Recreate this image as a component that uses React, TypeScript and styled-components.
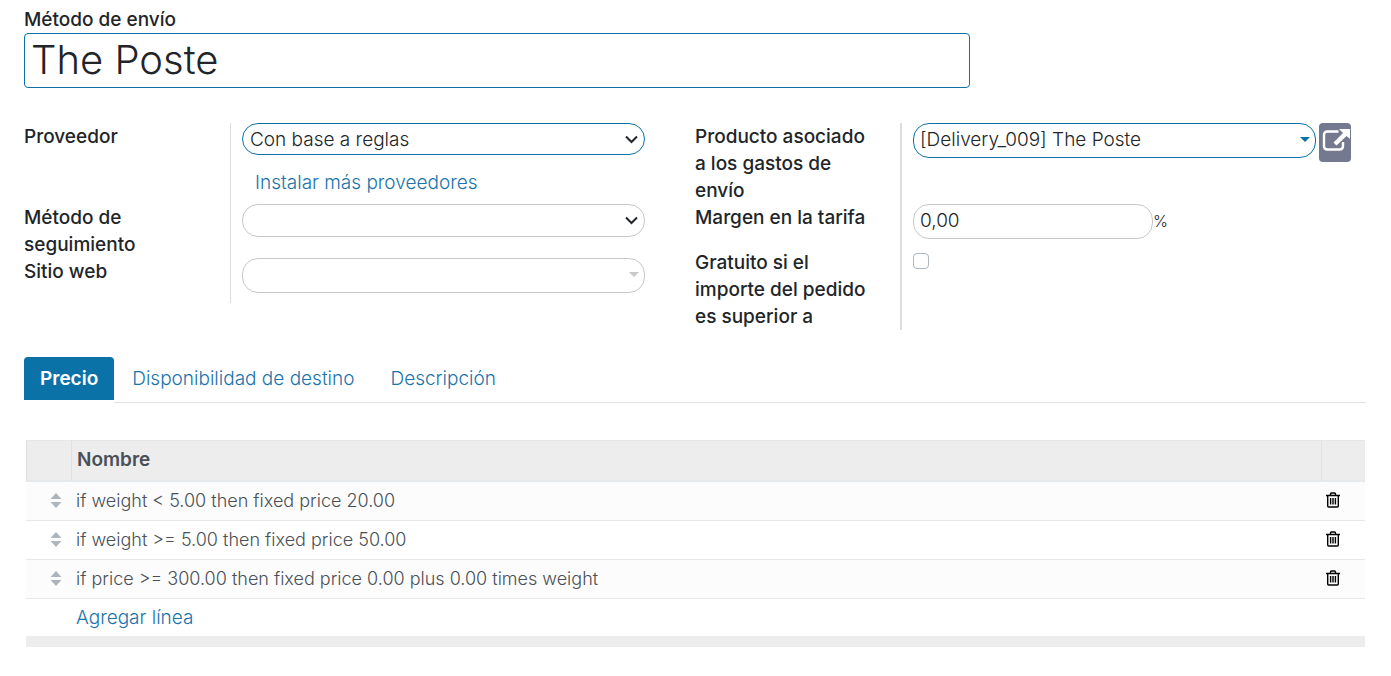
import React from 'react';
import styled, { createGlobalStyle, css } from 'styled-components';

const accent = '#0b72a8';
const line = '#c8c8c8';

const GlobalStyle = createGlobalStyle`
  * { box-sizing: border-box; }
  body {
    margin: 0;
    background: #fff;
    color: #212529;
    font-family: Inter, "Liberation Sans", sans-serif;
    font-size: 19px;
    font-weight: 300;
    line-height: 27px;
  }
  input, select, button { font: inherit; color: inherit; }
`;

const Sheet = styled.main`
  padding: 6px 25px 29px 24px;
`;

const TitleBlock = styled.div`
  width: 70.5%;
`;

const Label = styled.label`
  display: block;
  font-weight: 500;
`;

const TitleInput = styled.input`
  display: block;
  width: 100%;
  height: 55px;
  padding: 0 6px 2px;
  border: 1px solid ${accent};
  border-radius: 4px;
  background: #fff;
  font-size: 40px;
  outline: none;
`;

const Columns = styled.div`
  display: grid;
  grid-template-columns: 1fr 1fr;
  align-items: start;
  margin-top: 35px;
`;

const Group = styled.div<{ $end: number }>`
  padding-right: ${(p) => p.$end}px;
`;

const Row = styled.div<{ $rule: number; $min: number }>`
  display: grid;
  grid-template-columns: ${(p) => 207 - p.$rule}px 1fr;
  min-height: ${(p) => p.$min}px;

  > :first-child { padding-right: 25px; }
  > :last-child {
    border-left: ${(p) => p.$rule}px solid #dcdcde;
    padding-left: 11px;
  }
`;

const Field = styled.div``;

const Control = styled.div`
  position: relative;
  flex: 1;
`;

const box = css<{ $active?: boolean }>`
  display: block;
  width: 100%;
  border: 1px solid ${(p) => (p.$active ? accent : line)};
  border-radius: 16px;
  background: #fff;
  outline: none;
`;

const Select = styled.select<{ $active?: boolean }>`
  ${box}
  height: ${(p) => (p.$active ? 32 : 33)}px;
  padding: 0 7px;
  appearance: none;
`;

const TextInput = styled.input<{ $active?: boolean }>`
  ${box}
  height: 35px;
  padding: 0 6px 2px;
`;

const Chevron = styled.svg`
  position: absolute;
  right: 7px;
  top: 12px;
  pointer-events: none;
`;

const Caret = styled.span<{ $active?: boolean }>`
  position: absolute;
  right: 6px;
  top: 14px;
  border: 5px solid transparent;
  border-top-color: ${(p) => (p.$active ? accent : line)};
  border-bottom: 0;
  pointer-events: none;
`;

const Link = styled.a`
  color: #1a73aa;
  text-decoration: none;
`;

const InstallLink = styled(Link)`
  display: inline-block;
  margin: 14px 0 0 13px;
`;

const Inline = styled.div`
  display: flex;
  align-items: flex-start;
  gap: 3px;
`;

const OpenButton = styled.button`
  display: flex;
  justify-content: center;
  width: 32px;
  height: 39px;
  padding: 5px 0 0 2px;
  border: 0;
  border-radius: 4px;
  background: #75798f;
`;

const Percent = styled.div`
  display: flex;
  align-items: center;

  input { width: 240px; }
  span { font-size: 16px; }
`;

const Check = styled.input`
  display: block;
  appearance: none;
  width: 16px;
  height: 16px;
  margin: 4px 0 0;
  border: 1px solid #adb5bd;
  border-radius: 4px;
  background: #fff;
`;

const Tabs = styled.div`
  display: flex;
  height: 46px;
  margin-top: 27px;
  border-bottom: 1px solid #dee2e6;
`;

const Tab = styled.button<{ $selected?: boolean }>`
  height: 46px;
  padding: 0 18px 3px;
  border: 0;
  background: none;
  color: #1a73aa;
  white-space: nowrap;
  ${(p) =>
    p.$selected &&
    css`
      padding: 0 16px;
      border-bottom: 3px solid #fff;
      border-radius: 4px 4px 0 0;
      background: ${accent};
      background-clip: padding-box;
      color: #fff;
      font-weight: 600;
    `}
`;

const Table = styled.table`
  width: calc(100% - 3px);
  margin: 37px 1px 0 2px;
  border-collapse: separate;
  border-spacing: 0;
  table-layout: fixed;
  color: #495057;

  th, td { padding: 0; text-align: left; }
`;

const HeadCell = styled.th<{ $w?: number }>`
  width: ${(p) => (p.$w ? `${p.$w}px` : 'auto')};
  height: 42px;
  background: #ededed;
  border-top: 1px solid #e5e8eb;
  border-bottom: 2px solid #e6eaed;
  border-left: 1px solid #dfe0e2;
  font-weight: 600;

  &&:nth-child(2) { padding: 0 0 3px 5px; }
`;

const RuleRow = styled.tr`
  font-size: 18px;
  &:nth-child(odd) { background: #fcfcfc; }
  &&& td { height: 39px; padding-bottom: 2px; border-bottom: 1px solid #e6e8ea; }
`;

const Cell = styled.td`
  && { padding-left: 5px; }
`;

const IconButton = styled.button`
  display: flex;
  margin-left: 5px;
  padding: 0;
  border: 0;
  background: none;
`;

const Handle = styled.svg`
  display: block;
  margin-left: 24px;
`;

const AddCell = styled(Cell)`
  height: 37px;
`;

const FootCell = styled.td`
  height: 11px;
  background: #ededed;
`;

const ChevronIcon = () => (
  <Chevron width="13" height="9" viewBox="0 0 13 9" aria-hidden="true">
    <path d="M1 1.5 6.5 7 12 1.5" fill="none" stroke="#212529" strokeWidth="2" />
  </Chevron>
);

const OpenIcon = () => (
  <svg width="28" height="24" viewBox="0 0 28 24" aria-hidden="true">
    <path
      d="M16.5 3.5H5.5Q2 3.5 2 7V18Q2 21.500 5.500 21.500H17.500Q21 21.500 21 18V14"
      fill="none"
      stroke="#fff"
      strokeWidth="2.400"
    />
    <path d="M17 1H28V11L24.500 8 14.500 17.500 11.500 14.500 21 5Z" fill="#fff" />
  </svg>
);

const HandleIcon = () => (
  <Handle width="12" height="15" viewBox="0 0 12 15" aria-hidden="true">
    <path d="M6 0 11.500 6H.5ZM.5 9H11.500L6 15Z" fill="#adb5bd" />
  </Handle>
);

const TrashIcon = () => (
  <svg width="14" height="16" viewBox="0 0 14 16" aria-hidden="true">
    <path
      d="M0 3.500H14M4.500 3V2Q4.500 1 5.500 1H8.500Q9.500 1 9.500 2V3M1.700 3.500V14Q1.700 15 2.700 15H11.300Q12.300 15 12.300 14V3.500M4.600 6V12.500M7 6V12.500M9.400 6V12.500"
      fill="none"
      stroke="#000"
      strokeWidth="1.400"
    />
  </svg>
);

const rules = [
  'if weight < 5.00 then fixed price 20.00',
  'if weight >= 5.00 then fixed price 50.00',
  'if price >= 300.00 then fixed price 0.00 plus 0.00 times weight',
];

export default function App() {
  return (
    <>
      <GlobalStyle />
      <Sheet>
        <TitleBlock>
          <Label htmlFor="name">Método de envío</Label>
          <TitleInput id="name" defaultValue="The Poste" />
        </TitleBlock>

        <Columns>
          <Group $end={50}>
            <Row $rule={1} $min={81}>
              <Label htmlFor="provider">Proveedor</Label>
              <Field>
                <Control>
                  <Select id="provider" $active>
                    <option>Con base a reglas</option>
                  </Select>
                  <ChevronIcon />
                </Control>
                <InstallLink href="#proveedores">Instalar más proveedores</InstallLink>
              </Field>
            </Row>
            <Row $rule={1} $min={54}>
              <Label htmlFor="tracking">Método de seguimiento</Label>
              <Field>
                <Control>
                  <Select id="tracking">
                    <option></option>
                  </Select>
                  <ChevronIcon />
                </Control>
              </Field>
            </Row>
            <Row $rule={1} $min={45}>
              <Label htmlFor="website">Sitio web</Label>
              <Field>
                <Control>
                  <TextInput id="website" />
                  <Caret />
                </Control>
              </Field>
            </Row>
          </Group>

          <Group $end={15}>
            <Row $rule={2} $min={81}>
              <Label htmlFor="product">Producto asociado a los gastos de envío</Label>
              <Field>
                <Inline>
                  <Control>
                    <TextInput id="product" $active defaultValue="[Delivery_009] The Poste" />
                    <Caret $active />
                  </Control>
                  <OpenButton aria-label="Abrir producto">
                    <OpenIcon />
                  </OpenButton>
                </Inline>
              </Field>
            </Row>
            <Row $rule={2} $min={45}>
              <Label htmlFor="margin">Margen en la tarifa</Label>
              <Field>
                <Percent>
                  <TextInput id="margin" defaultValue="0,00" />
                  <span>%</span>
                </Percent>
              </Field>
            </Row>
            <Row $rule={2} $min={81}>
              <Label htmlFor="free">Gratuito si el importe del pedido es superior a</Label>
              <Field>
                <Check id="free" type="checkbox" />
              </Field>
            </Row>
          </Group>
        </Columns>

        <Tabs role="tablist">
          <Tab role="tab" aria-selected="true" $selected>Precio</Tab>
          <Tab role="tab" aria-selected="false">Disponibilidad de destino</Tab>
          <Tab role="tab" aria-selected="false">Descripción</Tab>
        </Tabs>

        <Table>
          <thead>
            <tr>
              <HeadCell $w={45} />
              <HeadCell>Nombre</HeadCell>
              <HeadCell $w={44} />
            </tr>
          </thead>
          <tbody>
            {rules.map((rule) => (
              <RuleRow key={rule}>
                <td><HandleIcon /></td>
                <Cell>{rule}</Cell>
                <td>
                  <IconButton aria-label="Eliminar">
                    <TrashIcon />
                  </IconButton>
                </td>
              </RuleRow>
            ))}
            <tr>
              <td />
              <AddCell colSpan={2}>
                <Link href="#agregar">Agregar línea</Link>
              </AddCell>
            </tr>
          </tbody>
          <tfoot>
            <tr>
              <FootCell colSpan={3} />
            </tr>
          </tfoot>
        </Table>
      </Sheet>
    </>
  );
}
